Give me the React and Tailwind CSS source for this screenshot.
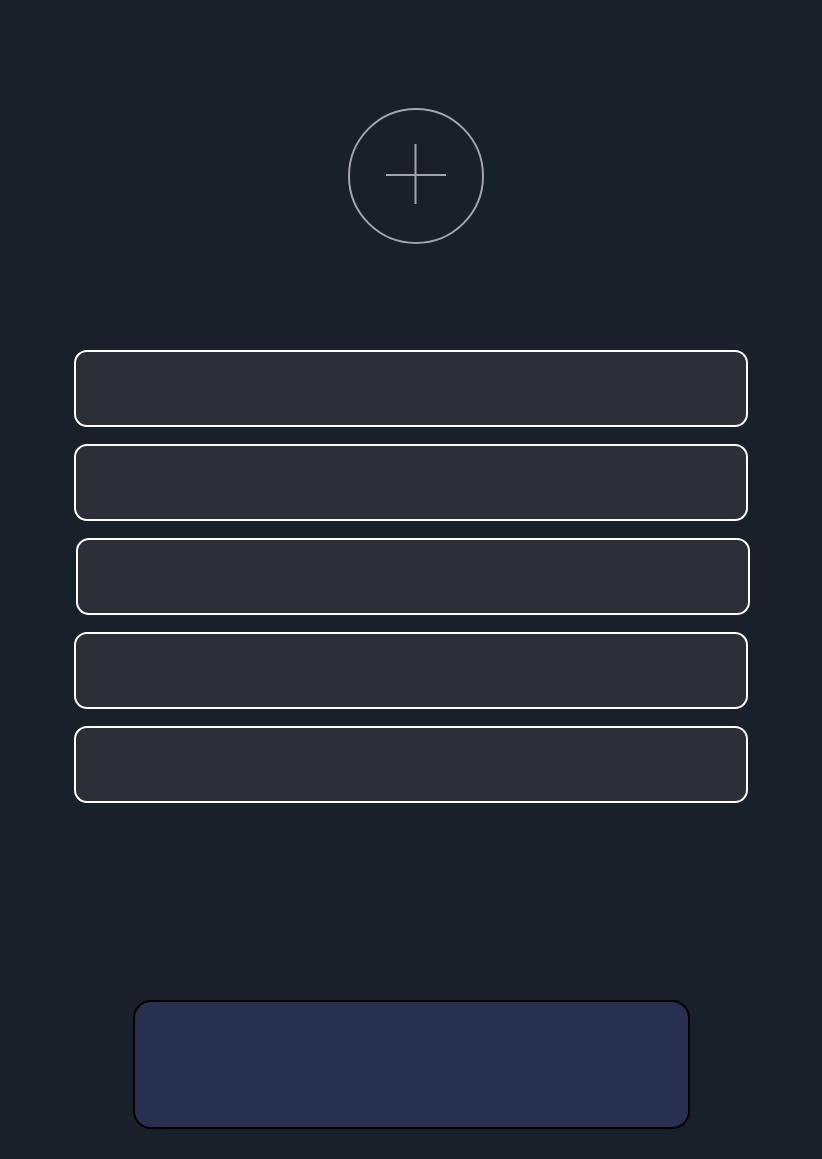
export default function App() {
  const rows = [0, 1, 2, 3, 4];
  return (
    <div className="min-h-[1159px] w-full bg-[#18202a] flex flex-col" style={{ fontFamily: '"Liberation Sans", sans-serif' }}>
      <div className="pt-[108px] pl-[348px]">
        <div className="w-[136px] h-[136px] rounded-full border-2 border-[#a3a4b0] flex items-start justify-center pt-[34px]">
          <svg width="60" height="60" viewBox="0 0 60 60">
            <line x1="29.5" y1="0" x2="29.5" y2="60" stroke="#a3a4b0" strokeWidth="2" />
            <line x1="0" y1="31" x2="60" y2="31" stroke="#a3a4b0" strokeWidth="2" />
          </svg>
        </div>
      </div>
      <div className="mt-[106px] flex flex-col gap-[17px]">
        {rows.map((i) => (
          <div
            key={i}
            className={
              i === 2
                ? "ml-[76px] w-[674px] h-[77px] rounded-[13px] border-2 border-white bg-[#2d2f38]"
                : "ml-[74px] w-[674px] h-[77px] rounded-[13px] border-2 border-white bg-[#2d2f38]"
            }
          />
        ))}
      </div>
      <div className="mt-[197px] ml-[133px] w-[557px] h-[129px] rounded-[18px] border-2 border-black bg-[#28304f]" />
    </div>
  );
}
